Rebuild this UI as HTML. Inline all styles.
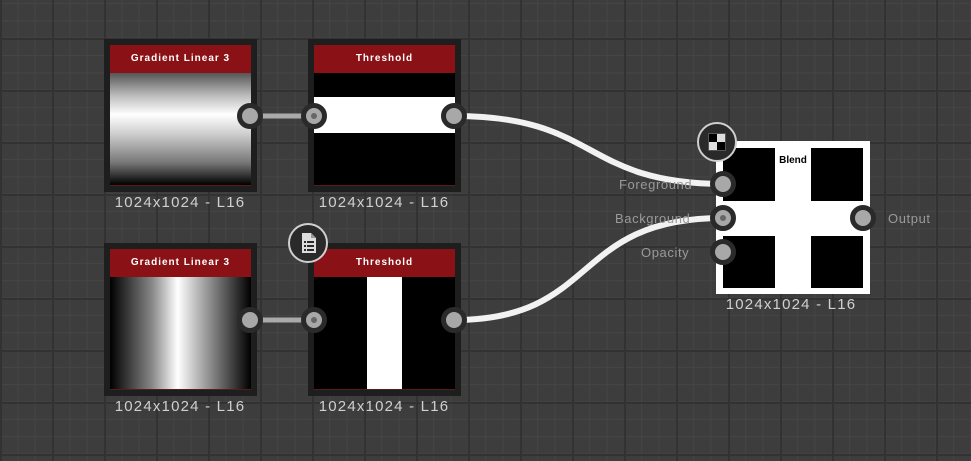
<!DOCTYPE html>
<html><head><style>
html,body{margin:0;padding:0}
body{width:971px;height:461px;overflow:hidden;position:relative;font-family:"Liberation Sans",sans-serif;
background-color:#3d3d3d;
background-image:
linear-gradient(to right,#323232 0 2px,transparent 2px),
linear-gradient(to bottom,#323232 0 2px,transparent 2px),
linear-gradient(to right,#454545 0 1px,transparent 1px),
linear-gradient(to bottom,#454545 0 1px,transparent 1px);
background-size:52px 52px,52px 52px,17.333px 17.333px,17.333px 17.333px;
background-position:52px 0,0 38px,0 0,0 3px;}
.node{position:absolute;width:153px;height:153px;background:#1e1e1e;box-sizing:border-box}
.hdr{position:absolute;left:6px;top:6px;width:141px;height:28px;background:#8a1115;color:#fff;font-weight:bold;font-size:10px;letter-spacing:1px;text-align:center;line-height:28px}
.img{position:absolute;left:6px;top:34px;width:141px;height:113px;border-bottom:1px solid #5a1a1a;box-sizing:border-box}
.lbl{position:absolute;color:#d0d0d0;font-family:"Liberation Sans",sans-serif;font-size:15px;letter-spacing:1.2px;width:160px;text-align:center}
.port{position:absolute;width:16px;height:16px;border-radius:50%;background:#a8a8a8;border:5px solid #2a2a2a;transform:translate(-13px,-13px)}
.port.in::after{content:"";position:absolute;left:5px;top:5px;width:6px;height:6px;border-radius:50%;background:#666}
.pl{position:absolute;color:#9a9a9a;font-size:13px;letter-spacing:0.6px}
</style></head><body>
<svg width="971" height="461" style="position:absolute;left:0;top:0">
<path d="M250 116 H314" stroke="#aaa" stroke-width="5"/>
<path d="M250 320 H314" stroke="#aaa" stroke-width="5"/>
<path d="M454 116 C600 116 580 183 723 184" stroke="#f2f2f2" stroke-width="6" fill="none"/>
<path d="M454 320 C600 320 570 218 723 218" stroke="#f2f2f2" stroke-width="6" fill="none"/>
</svg>

<div class="node" style="left:104px;top:39px"><div class="hdr">Gradient Linear 3</div>
<div class="img" style="background:linear-gradient(to bottom,#555 0%,#bbb 20%,#fff 37%,#ccc 55%,#777 80%,#000 100%)"></div></div>
<div class="lbl" style="left:100px;top:194px">1024x1024 - L16</div>

<div class="node" style="left:308px;top:39px"><div class="hdr">Threshold</div>
<div class="img" style="background:linear-gradient(to bottom,#000 0 24px,#fff 24px 60px,#000 60px)"></div></div>
<div class="lbl" style="left:304px;top:194px">1024x1024 - L16</div>

<div class="node" style="left:104px;top:243px"><div class="hdr">Gradient Linear 3</div>
<div class="img" style="background:linear-gradient(to right,#000 0%,#888 30%,#fff 48%,#aaa 65%,#000 100%)"></div></div>
<div class="lbl" style="left:100px;top:398px">1024x1024 - L16</div>

<div class="node" style="left:308px;top:243px"><div class="hdr">Threshold</div>
<div class="img" style="background:linear-gradient(to right,#000 0 53px,#fff 53px 88px,#000 88px)"></div></div>
<div class="lbl" style="left:304px;top:398px">1024x1024 - L16</div>

<div style="position:absolute;left:716px;top:141px;width:154px;height:153px;background:#fff">
<div style="position:absolute;left:7px;top:7px;width:52px;height:53px;background:#000"></div>
<div style="position:absolute;left:95px;top:7px;width:52px;height:53px;background:#000"></div>
<div style="position:absolute;left:7px;top:95px;width:52px;height:52px;background:#000"></div>
<div style="position:absolute;left:95px;top:95px;width:52px;height:52px;background:#000"></div>
<div style="position:absolute;left:59px;top:14px;width:36px;text-align:center;font-size:10px;font-weight:bold;color:#000">Blend</div>
</div>
<div class="lbl" style="left:711px;top:296px">1024x1024 - L16</div>

<div class="port" style="left:250px;top:116px"></div>
<div class="port in" style="left:314px;top:116px"></div>
<div class="port" style="left:454px;top:116px"></div>
<div class="port" style="left:250px;top:320px"></div>
<div class="port in" style="left:314px;top:320px"></div>
<div class="port" style="left:454px;top:320px"></div>
<div class="port" style="left:723px;top:184px"></div>
<div class="port in" style="left:723px;top:218px"></div>
<div class="port" style="left:723px;top:252px"></div>
<div class="port" style="left:863px;top:218px"></div>

<div class="pl" style="left:619px;top:177px">Foreground</div>
<div class="pl" style="left:615px;top:211px">Background</div>
<div class="pl" style="left:641px;top:245px">Opacity</div>
<div class="pl" style="left:888px;top:211px">Output</div>

<div style="position:absolute;left:697px;top:122px;width:36px;height:36px;border-radius:50%;background:#2a2a2a;border:2px solid #cfcfcf">
<div style="position:absolute;left:9px;top:9px;width:18px;height:18px;background:#ddd;border:1px solid #555;box-sizing:border-box"></div>
<div style="position:absolute;left:10px;top:10px;width:8px;height:8px;background:#000"></div>
<div style="position:absolute;left:18px;top:18px;width:8px;height:8px;background:#000"></div>
</div>
<div style="position:absolute;left:288px;top:223px;width:36px;height:36px;border-radius:50%;background:#2a2a2a;border:2px solid #cfcfcf">
<svg width="36" height="36"><path d="M12 8 H21 L26 13 V28 H12 Z" fill="#ddd"/><path d="M21 8 V13 H26" fill="#999"/>
<g fill="#2a2a2a"><rect x="14" y="16" width="2" height="2"/><rect x="17" y="16" width="7" height="2"/><rect x="14" y="20" width="2" height="2"/><rect x="17" y="20" width="7" height="2"/><rect x="14" y="24" width="2" height="2"/><rect x="17" y="24" width="7" height="2"/></g></svg>
</div>
</body></html>
